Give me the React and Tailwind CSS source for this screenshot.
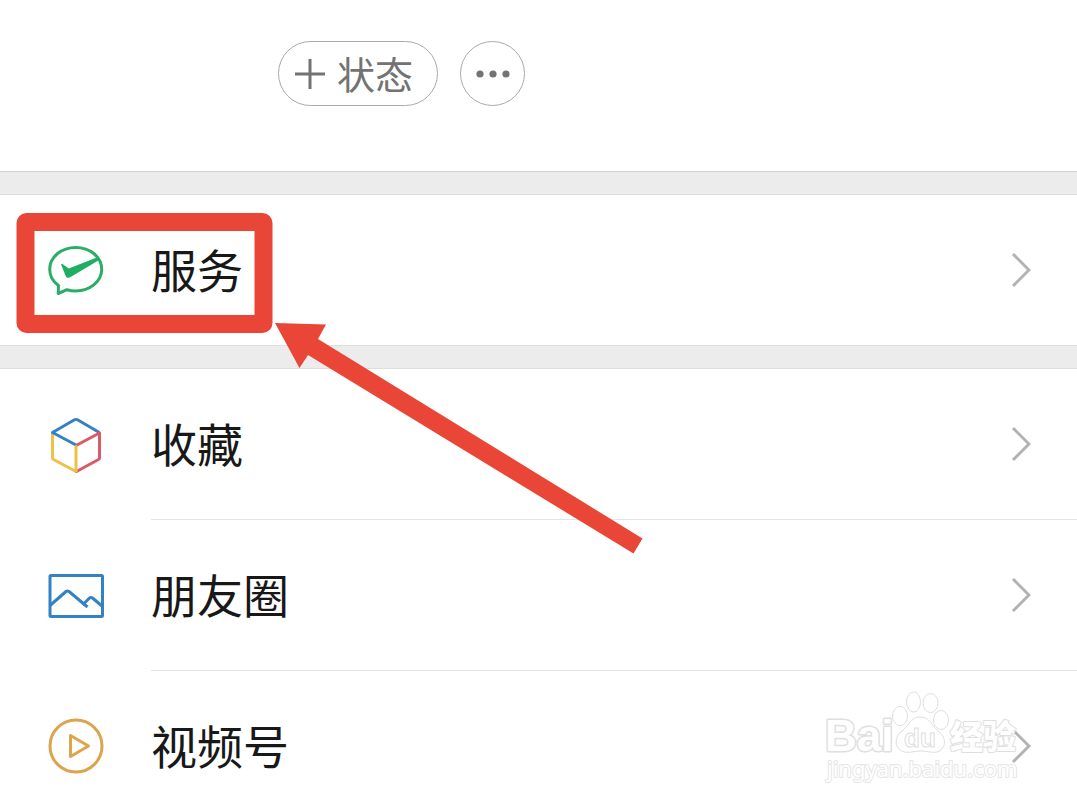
import React from "react";

const ServiceIcon = () => (
  <svg className="size-14 shrink-0" viewBox="0 0 56 56" fill="none" aria-hidden="true">
    <path
      d="M19 47.700C21.800 48.600 24.700 49 27.700 49C42 49 53.700 39.500 53.700 27.200C53.700 15 42 5.500 27.700 5.500C13.400 5.500 1.700 15 1.700 27.200C1.700 33.500 5 39.500 10.500 43.500L10.200 51.500L19 47.700Z"
      stroke="#2aae67"
      strokeWidth="3"
      strokeLinejoin="round"
    />
    <path d="M13 22.300L14.500 22L20.800 26.500L50 15L52 17.500L23 34.700C21 36 19 36.200 17.800 34.200Z" fill="#1fae63" />
  </svg>
);

const FavoritesIcon = () => (
  <svg
    className="size-14 shrink-0"
    viewBox="0 0 56 56"
    fill="none"
    strokeWidth="3"
    strokeLinecap="round"
    strokeLinejoin="round"
    aria-hidden="true"
  >
    <path d="M28 54.500L5.500 42.500Q4.500 42 4.500 41V17" stroke="#eec146" />
    <path d="M28.500 54.500L50.500 42.500Q51.500 42 51.500 41V16.500" stroke="#d95b68" />
    <path d="M28 28L4.500 15.500L26.500 2.800Q28 2 29.500 2.800L50.500 15" stroke="#3282c4" />
    <path d="M51.500 16L29 28" stroke="#d95b68" />
    <path d="M28 29.500V54" stroke="#eec146" />
  </svg>
);

const MomentsIcon = () => (
  <svg
    className="size-14 shrink-0"
    viewBox="0 0 56 56"
    fill="none"
    stroke="#3282c4"
    strokeWidth="3"
    strokeLinejoin="round"
    aria-hidden="true"
  >
    <rect x="2" y="7.500" width="52.500" height="41" rx="1" />
    <path d="M2 37.500L18 23.500Q19.500 22.500 21 23.500L39.500 39M34.500 37L41.500 30Q43 29 44.500 30L54 38" />
  </svg>
);

const ChannelsIcon = () => (
  <svg
    className="size-14 shrink-0"
    viewBox="0 0 56 56"
    fill="none"
    stroke="#dda450"
    strokeWidth="3"
    strokeLinejoin="round"
    aria-hidden="true"
  >
    <circle cx="28" cy="28" r="26" />
    <path d="M22.500 17.500V38.500L40.500 28Z" />
  </svg>
);

const Chevron = () => (
  <svg className="h-9 w-5 shrink-0" viewBox="0 0 20 36" fill="none" aria-hidden="true">
    <path d="M2 2L18 18L2 34" stroke="#b2b2b2" strokeWidth="3" />
  </svg>
);

const MenuRow = ({ icon, label, divided }) => (
  <a
    href="#"
    className={`flex items-center pl-12 text-[#181818] ${divided ? "h-[151px]" : "h-[150px]"}`}
  >
    {icon}
    <span
      className={`ml-[47px] flex h-full flex-1 items-center justify-between pr-[46px] ${
        divided ? "border-b border-[#e4e4e4]" : ""
      }`}
    >
      <span className="pb-1 text-[46px] leading-none">{label}</span>
      <Chevron />
    </span>
  </a>
);

const Watermark = () => (
  <svg
    className="pointer-events-none absolute top-[688px] right-[54px] h-24 w-[200px]"
    viewBox="0 0 200 96"
    fill="#ffffff"
    stroke="#dadada"
    strokeWidth="1"
    opacity="0.85"
    aria-hidden="true"
  >
    <g fontFamily="Liberation Sans, sans-serif" fontWeight="700">
      <text x="2" y="63" fontSize="44" strokeWidth="3" strokeLinejoin="round" paintOrder="stroke">Bai</text>
      <ellipse cx="77" cy="28" rx="7.500" ry="9.500" />
      <ellipse cx="90.500" cy="14" rx="7" ry="10" />
      <ellipse cx="107.500" cy="15" rx="7.500" ry="9.500" />
      <ellipse cx="118" cy="32" rx="7.500" ry="9.500" />
      <path d="M97 29C87 29 85 39 79 43C73 47 71 56 76 61C82 67 90 63 98 63C106 63 114 67 119 61C124 55 121 47 115 43C109 38 107 29 97 29Z" />
      <text x="81" y="59" fontSize="26">du</text>
    </g>
    <g strokeLinejoin="round" paintOrder="stroke">
      <text x="127" y="61" fontSize="33" fontWeight="900" strokeWidth="2" fontFamily="Noto Sans CJK SC, sans-serif">经验</text>
      <text x="4" y="89" fontSize="22" strokeWidth="2" stroke="#e2e2e2" fontFamily="Noto Sans, sans-serif">jingyan.baidu.com</text>
    </g>
  </svg>
);

// Red box and arrow that point at the service entry
const Annotation = () => (
  <svg
    className="pointer-events-none absolute top-0 left-0 h-[560px] w-[660px]"
    viewBox="0 0 660 560"
    aria-hidden="true"
  >
    <rect x="25.500" y="222" width="238" height="102" rx="1" fill="none" stroke="#e94638" strokeWidth="18" strokeLinejoin="round" />
    <path d="M275 323L326 324.500L318 339L642.500 538.500L633.500 553.500L308 355L299.500 368Z" fill="#e94638" />
  </svg>
);

const App = () => {
  return (
    <main className="relative h-screen overflow-hidden bg-white font-['Noto_Sans_CJK_SC',sans-serif]">
      <header className="flex h-[171px] items-start gap-[22px] pt-[41px] pl-[278px]">
        <button className="flex h-[65px] w-40 items-center gap-3 rounded-full border border-[#aaaaaa] pl-4 text-[38px] leading-none text-[#737373]">
          <svg className="size-[30px]" viewBox="0 0 30 30" fill="none" aria-hidden="true">
            <path d="M15 0V30M0 15H30" stroke="#737373" strokeWidth="3" />
          </svg>
          <span className="pb-0.5">状态</span>
        </button>
        <button
          aria-label="更多"
          className="flex size-[65px] items-center justify-center rounded-full border border-[#aaaaaa]"
        >
          <svg className="h-2 w-[34px]" viewBox="0 0 34 8" fill="#737373" aria-hidden="true">
            <circle cx="4" cy="4" r="3.600" />
            <circle cx="17" cy="4" r="3.600" />
            <circle cx="30" cy="4" r="3.600" />
          </svg>
        </button>
      </header>

      <nav>
        <div className="h-6 border-t border-b border-t-[#cfcfcf] border-b-[#dedede] bg-[#ececec]" />
        <MenuRow icon={<ServiceIcon />} label="服务" />
        <div className="h-6 border-t border-b border-[#dedede] bg-[#ececec]" />
        <MenuRow icon={<FavoritesIcon />} label="收藏" divided />
        <MenuRow icon={<MomentsIcon />} label="朋友圈" divided />
        <MenuRow icon={<ChannelsIcon />} label="视频号" />
      </nav>

      <Watermark />
      <Annotation />
    </main>
  );
};

export default App;
